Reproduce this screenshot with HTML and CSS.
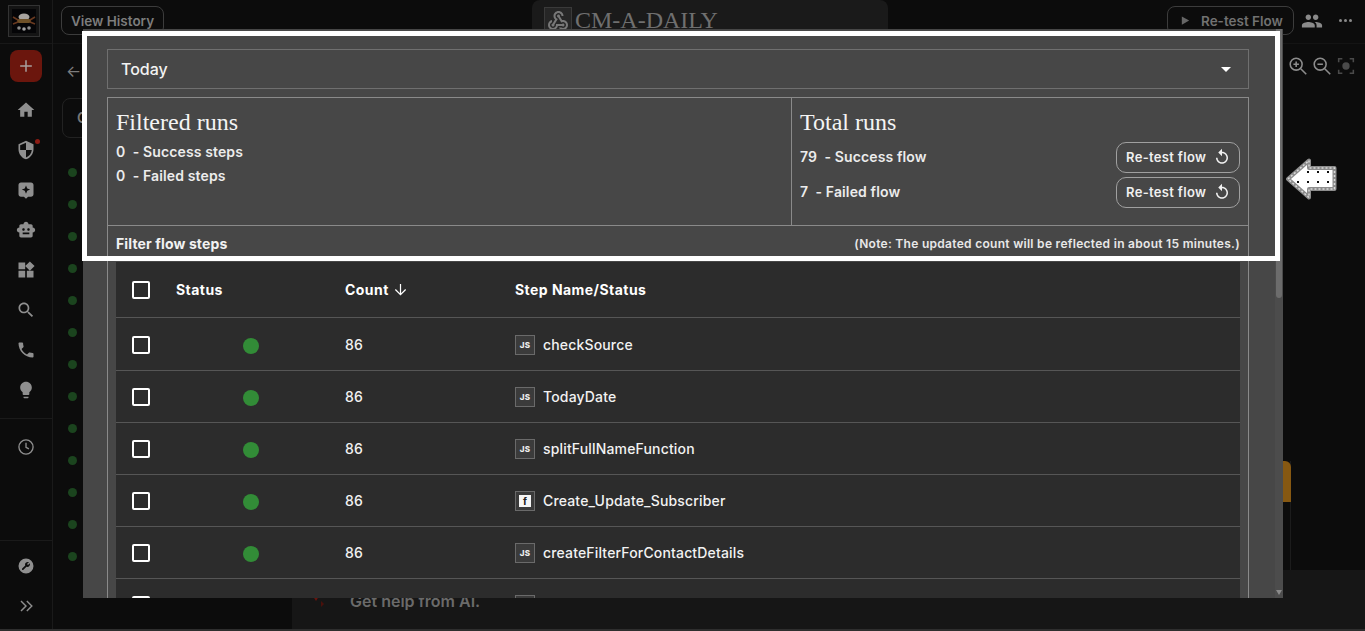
FILE: index.html
```html
<!DOCTYPE html>
<html lang="en">
<head>
<meta charset="utf-8">
<title>CM-A-DAILY</title>
<link rel="stylesheet" href="styles.css">
</head>
<body>
<div class="app">
  <aside class="sidebar">
    <div class="logo-wrap">
      <div class="logo">
        <svg viewBox="0 0 30 30" class="logo-svg"><rect x="3" y="3" width="24" height="24" fill="#050507"/><ellipse cx="15" cy="11" rx="5.500" ry="3.500" fill="#a8a4a0"/><rect x="8" y="13" width="14" height="4" rx="2" fill="#6e5128"/><path d="M4 11l5 3M26 11l-5 3M4 18l5-2M26 18l-5-2" stroke="#6a3a20" stroke-width="1.600"/><circle cx="10" cy="22" r="1.800" fill="#8c8c8c"/><circle cx="15" cy="23" r="1.800" fill="#a0a0a0"/><circle cx="20" cy="22" r="1.800" fill="#8c8c8c"/></svg>
      </div>
    </div>
    <div class="new-btn"><svg viewBox="0 0 24 24" class="ico-side"><path d="M12 5v14M5 12h14" stroke="#a8a09e" stroke-width="1.800" fill="none"/></svg></div>
    <nav class="side-nav">
      <div class="side-item"><svg viewBox="0 0 24 24" class="ico-side"><path d="M10 20v-6h4v6h5v-8h3L12 3 2 12h3v8z"/></svg></div>
      <div class="side-item side-alert"><svg viewBox="0 0 24 24" class="ico-side"><path d="M12 1L3 5v6c0 5.550 3.840 10.740 9 12 5.160-1.260 9-6.450 9-12V5l-9-4zm0 10.990h7c-.53 4.120-3.280 7.790-7 8.940V12H5V6.300l7-3.110v8.800z"/></svg></div>
      <div class="side-item"><svg viewBox="0 0 24 24" class="ico-side"><path fill-rule="evenodd" d="M6 3h12c1.700 0 3 1.300 3 3v11c0 1.700-1.300 3-3 3h-3.500L12 22.500 9.500 20H6c-1.700 0-3-1.300-3-3V6c0-1.700 1.300-3 3-3zm6 3.500-1.500 3.800L7 11.500l3.500 1.300 1.500 3.700 1.500-3.700 3.500-1.300-3.500-1.200z"/></svg></div>
      <div class="side-item"><svg viewBox="0 0 24 24" class="ico-side"><path d="M20 9V7c0-1.100-.9-2-2-2h-3c0-1.660-1.340-3-3-3S9 3.340 9 5H6c-1.100 0-2 .9-2 2v2c-1.660 0-3 1.340-3 3s1.340 3 3 3v4c0 1.100.9 2 2 2h12c1.100 0 2-.9 2-2v-4c1.660 0 3-1.340 3-3s-1.340-3-3-3zM7.500 11.500c0-.83.67-1.500 1.500-1.500s1.500.67 1.500 1.500S9.830 13 9 13s-1.500-.67-1.500-1.500zM16 17H8v-2h8v2zm-1-4c-.83 0-1.500-.67-1.500-1.500S14.170 10 15 10s1.500.67 1.500 1.500S15.830 13 15 13z"/></svg></div>
      <div class="side-item"><svg viewBox="0 0 24 24" class="ico-side"><path d="M13 13v8h8v-8h-8zM3 21h8v-8H3v8zM3 3v8h8V3H3zm13.660-1.310L11 7.340 16.660 13l5.660-5.660-5.660-5.650z"/></svg></div>
      <div class="side-item"><svg viewBox="0 0 24 24" class="ico-side"><path d="M15.500 14h-.79l-.28-.27C15.410 12.590 16 11.110 16 9.500 16 5.910 13.090 3 9.500 3S3 5.910 3 9.500 5.910 16 9.500 16c1.610 0 3.090-.59 4.230-1.570l.27.28v.79l5 4.990L20.490 19l-4.990-5zm-6 0C7.010 14 5 11.990 5 9.500S7.010 5 9.500 5 14 7.010 14 9.500 11.990 14 9.500 14z"/></svg></div>
      <div class="side-item"><svg viewBox="0 0 24 24" class="ico-side"><path d="M6.620 10.790c1.440 2.830 3.760 5.140 6.590 6.590l2.200-2.200c.27-.27.67-.36 1.020-.24 1.120.37 2.330.57 3.570.57.55 0 1 .45 1 1V20c0 .55-.45 1-1 1-9.390 0-17-7.610-17-17 0-.55.45-1 1-1h3.500c.55 0 1 .45 1 1 0 1.250.2 2.450.57 3.570.11.35.03.74-.25 1.020l-2.200 2.200z"/></svg></div>
      <div class="side-item"><svg viewBox="0 0 24 24" class="ico-side"><path d="M9 21c0 .55.45 1 1 1h4c.55 0 1-.45 1-1v-1H9v1zm3-19C8.140 2 5 5.140 5 9c0 2.380 1.190 4.470 3 5.740V17c0 .55.45 1 1 1h6c.55 0 1-.45 1-1v-2.260c1.810-1.270 3-3.360 3-5.740 0-3.860-3.140-7-7-7z"/></svg></div>
    </nav>
    <div class="side-section">
      <div class="side-item"><svg viewBox="0 0 24 24" class="ico-side"><circle cx="12" cy="12" r="8.500" fill="none" stroke="#8f8f8f" stroke-width="1.600"/><path d="M12 7v5.300l3.500 2" fill="none" stroke="#8f8f8f" stroke-width="1.600"/></svg></div>
    </div>
    <div class="side-bottom">
      <div class="side-item"><svg viewBox="0 0 24 24" class="ico-side"><path fill-rule="evenodd" d="M12 3a9 9 0 1 1 0 18 9 9 0 0 1 0-18zm3.500 4.500-2.300 2.200 1.200 1.200 2.200-2.200c.4 1.300.1 2.600-.8 3.500-.9.900-2.100 1.100-3.200.7l-3.700 3.700c-.4.4-1.100.4-1.500 0s-.4-1.100 0-1.500l3.700-3.700c-.4-1.100-.2-2.400.7-3.200.9-.9 2.400-1.200 3.700-.7z"/></svg></div>
      <div class="side-item"><svg viewBox="0 0 24 24" class="ico-side"><path d="M6 6l6 6-6 6M13 6l6 6-6 6" fill="none" stroke="#8f8f8f" stroke-width="1.700"/></svg></div>
    </div>
  </aside>

  <div class="main">
    <header class="topbar">
      <div class="history-btn">View History</div>
      <div class="title-panel">
        <div class="title-icon"><svg viewBox="0 0 24 24" class="ico-title"><path d="M10 15h5.880c.27-.31.67-.5 1.120-.5.83 0 1.500.67 1.500 1.500s-.67 1.500-1.500 1.500c-.44 0-.84-.19-1.120-.5H11.900c-.46 2.280-2.480 4-4.900 4-2.760 0-5-2.240-5-5 0-2.420 1.720-4.440 4-4.900v2.070c-1.160.41-2 1.530-2 2.830 0 1.650 1.350 3 3 3s3-1.350 3-3v-1zm2.500-11c1.650 0 3 1.350 3 3h2c0-2.760-2.240-5-5-5s-5 2.240-5 5c0 1.430.6 2.710 1.550 3.620l-2.350 3.900c-.68.14-1.200.75-1.200 1.480 0 .83.67 1.500 1.500 1.500s1.500-.67 1.500-1.500c0-.16-.02-.31-.07-.45l3.380-5.630C10.490 9.610 9.500 8.420 9.500 7c0-1.650 1.350-3 3-3zm4.500 9c-.64 0-1.230.2-1.730.54l-3.050-5.070C11.290 8.140 11 7.610 11 7c0-.83.67-1.500 1.500-1.500S14 6.170 14 7c0 .15-.02.29-.06.43l2.190 3.640c.28-.05.57-.07.87-.07 2.760 0 5 2.240 5 5s-2.240 5-5 5c-1.850 0-3.470-1.010-4.330-2.500h2.670c.48.32 1.060.5 1.660.5 1.650 0 3-1.350 3-3s-1.350-3-3-3z"/></svg></div>
        <span class="title-text">CM-A-DAILY</span>
      </div>
      <div class="top-right">
        <div class="retest-top"><svg viewBox="0 0 12 12" class="ico-play"><path d="M2 1.500v9l8-4.500z"/></svg><span>Re-test Flow</span></div>
        <svg viewBox="0 0 24 24" class="ico-people"><path d="M16 11c1.660 0 2.990-1.340 2.990-3S17.660 5 16 5c-1.660 0-3 1.340-3 3s1.340 3 3 3zm-8 0c1.660 0 2.990-1.340 2.990-3S9.660 5 8 5C6.340 5 5 6.340 5 8s1.340 3 3 3zm0 2c-2.330 0-7 1.170-7 3.500V19h14v-2.500c0-2.330-4.670-3.500-7-3.500zm8 0c-.29 0-.62.02-.97.05 1.160.84 1.970 1.970 1.970 3.450V19h6v-2.500c0-2.330-4.670-3.500-7-3.500z"/></svg>
        <div class="more-dots"><i></i><i></i><i></i></div>
      </div>
    </header>
    <div class="canvas">
      <div class="back-arrow">←</div>
      <div class="under-card">C</div>
      <div class="dots">
        <i></i><i></i><i></i><i></i><i></i><i></i><i></i><i></i><i></i><i></i><i></i><i></i><i></i>
      </div>
    </div>
    <div class="zoom-tools">
      <svg viewBox="0 0 24 24" class="ico-zoom"><circle cx="10" cy="10" r="6.500" fill="none" stroke="#8c8c8c" stroke-width="1.700"/><path d="M15 15l6 6M10 7v6M7 10h6" stroke="#8c8c8c" stroke-width="1.700" fill="none"/></svg>
      <svg viewBox="0 0 24 24" class="ico-zoom"><circle cx="10" cy="10" r="6.500" fill="none" stroke="#8c8c8c" stroke-width="1.700"/><path d="M15 15l6 6M7 10h6" stroke="#8c8c8c" stroke-width="1.700" fill="none"/></svg>
      <svg viewBox="0 0 24 24" class="ico-zoom"><path d="M4 8V4h4M16 4h4v4M20 16v4h-4M8 20H4v-4" fill="none" stroke="#4a4a4a" stroke-width="1.700"/><circle cx="12" cy="12" r="4" fill="#4a4a4a"/></svg>
    </div>
    <div class="orange-tab"></div>
    <div class="ai-panel">
      <svg viewBox="0 0 20 20" class="ico-ai"><path d="M3 2h10l-5 8z" fill="#6a140e"/><path d="M13 10l3 3-3 3z" fill="#4a100b"/></svg>
      <span class="ai-text">Get help from AI.</span>
    </div>
  </div>
</div>

<section class="modal">
  <div class="select">
    <span>Today</span>
    <i class="caret"></i>
  </div>
  <div class="panel">
    <div class="stats">
      <div class="stat-left">
        <h2 class="stat-title">Filtered runs</h2>
        <div class="stat-lines">
          <div class="stat-line">0&nbsp;&nbsp;- Success steps</div>
          <div class="stat-line">0&nbsp;&nbsp;- Failed steps</div>
        </div>
      </div>
      <div class="stat-right">
        <h2 class="stat-title">Total runs</h2>
        <div class="total-rows">
          <div class="total-row">
            <span class="stat-line">79&nbsp;&nbsp;- Success flow</span>
            <button class="retest">Re-test flow<svg viewBox="0 0 24 24" class="ico-replay"><path d="M12 5V1L7 6l5 5V7c3.310 0 6 2.690 6 6s-2.690 6-6 6-6-2.690-6-6H4c0 4.420 3.580 8 8 8s8-3.580 8-8-3.580-8-8-8z"/></svg></button>
          </div>
          <div class="total-row">
            <span class="stat-line">7&nbsp;&nbsp;- Failed flow</span>
            <button class="retest">Re-test flow<svg viewBox="0 0 24 24" class="ico-replay"><path d="M12 5V1L7 6l5 5V7c3.310 0 6 2.690 6 6s-2.690 6-6 6-6-2.690-6-6H4c0 4.420 3.580 8 8 8s8-3.580 8-8-3.580-8-8-8z"/></svg></button>
          </div>
        </div>
      </div>
    </div>
    <div class="filter-row">
      <span class="filter-title">Filter flow steps</span>
      <span class="filter-note">(Note: The updated count will be reflected in about 15 minutes.)</span>
    </div>
    <div class="table">
      <div class="tr th">
        <i class="check"></i>
        <span>Status</span>
        <span class="count-head">Count <svg viewBox="0 0 16 16" class="ico-down"><path d="M8 2v11.500M2.500 8l5.500 5.500L13.500 8" fill="none" stroke="#fff" stroke-width="1.300"/></svg></span>
        <span>Step Name/Status</span>
      </div>
      <div class="tr first">
        <i class="check"></i><i class="status"></i><span>86</span>
        <span class="step"><b class="step-ico">JS</b>checkSource</span>
      </div>
      <div class="tr">
        <i class="check"></i><i class="status"></i><span>86</span>
        <span class="step"><b class="step-ico">JS</b>TodayDate</span>
      </div>
      <div class="tr">
        <i class="check"></i><i class="status"></i><span>86</span>
        <span class="step"><b class="step-ico">JS</b>splitFullNameFunction</span>
      </div>
      <div class="tr">
        <i class="check"></i><i class="status"></i><span>86</span>
        <span class="step"><b class="step-ico fb"><em>f</em></b>Create_Update_Subscriber</span>
      </div>
      <div class="tr">
        <i class="check"></i><i class="status"></i><span>86</span>
        <span class="step"><b class="step-ico">JS</b>createFilterForContactDetails</span>
      </div>
      <div class="tr">
        <i class="check"></i><i></i><span></span>
        <span class="step"><i class="step-ico"></i></span>
      </div>
    </div>
  </div>
  <div class="scrollbar"><div class="thumb"></div><i class="scroll-down"></i></div>
</section>

<div class="highlight"></div>

<svg class="pointer" viewBox="0 0 52 42">
  <path d="M3 21 24 2.500V10h25.500v21H24v8.500z" fill="#fff" stroke="#8c8c8c" stroke-width="4" stroke-linejoin="round"/>
  <path d="M3 21 24 2.500V10h25.500v21H24v8.500z" fill="none" stroke="#d8d8d8" stroke-width="1.500" stroke-dasharray="2 2"/>
  <g fill="#111"><rect x="22" y="13" width="2" height="2"/><rect x="32" y="13" width="2" height="2"/><rect x="42" y="13" width="2" height="2"/><rect x="12" y="23" width="2" height="2"/><rect x="22" y="23" width="2" height="2"/><rect x="32" y="23" width="2" height="2"/><rect x="42" y="23" width="2" height="2"/></g>
</svg>
</body>
</html>
```

FILE: styles.css
```css
* { box-sizing: border-box; }
html, body { margin: 0; height: 631px; overflow: hidden; }
body { background: #0c0c0c; font-family: Inter, "Liberation Sans", sans-serif; color: #fff; position: relative; }

.app { display: flex; height: 629px; }
body::after { content: ""; position: absolute; left: 0; right: 0; bottom: 0; height: 2px; background: #2e2e2e; }

/* sidebar */
.sidebar { width: 53px; flex: none; border-right: 1px solid #1a1a1a; display: flex; flex-direction: column; height: 629px; }
.logo-wrap { height: 44px; padding: 5px 0 0 8px; border-bottom: 1px solid #181818; }
.logo { width: 32px; height: 32px; border: 1px solid #333; background: #141414; }
.logo-svg { width: 30px; height: 30px; display: block; }
.new-btn { width: 32px; height: 32px; margin: 6px 0 8px 10px; border-radius: 8px; background: #6b160d; display: flex; align-items: center; justify-content: center; }
.side-nav { display: flex; flex-direction: column; border-bottom: 1px solid #1a1a1a; padding-bottom: 8px; }
.side-item { height: 40px; width: 52px; display: flex; align-items: center; justify-content: center; position: relative; }
.ico-side { width: 20px; height: 20px; fill: #8f8f8f; }
.side-alert::after { content: ""; position: absolute; left: 35px; top: 9px; width: 5px; height: 5px; border-radius: 50%; background: #8c1c14; }
.side-section { padding-top: 8px; }
.side-bottom { margin-top: auto; border-top: 1px solid #1a1a1a; padding: 5px 0 3px; }

/* main underlay */
.main { flex: 1; position: relative; display: flex; flex-direction: column; min-width: 0; }
.topbar { height: 44px; padding: 6px 0 0 8px; display: flex; align-items: flex-start; border-bottom: 1px solid #141414; }
.history-btn { width: 103px; height: 29px; border: 1px solid #3c3c3c; border-radius: 8px; color: #7d7d7d; font-size: 13.500px; font-weight: 600; display: flex; align-items: center; justify-content: center; }
.title-panel { margin: -6px 0 0 368px; width: 356px; height: 40px; background: #1a1a1a; border-radius: 8px; padding: 7px 0 0 12px; display: flex; align-items: flex-start; }
.title-icon { width: 28px; height: 28px; border: 1px solid #3a3a3a; background: #262626; display: flex; align-items: center; justify-content: center; }
.ico-title { width: 24px; height: 24px; fill: #787878; }
.title-text { font-family: "Liberation Serif", serif; font-size: 24px; color: #6f6f6f; margin-left: 3px; line-height: 26px; }
.top-right { margin-left: auto; display: flex; align-items: center; height: 29px; }
.retest-top { width: 127px; height: 29px; border: 1px solid #3c3c3c; border-radius: 8px; color: #717171; font-size: 13.500px; font-weight: 600; display: flex; align-items: center; padding-left: 12px; margin-right: 7px; }
.ico-play { width: 11px; height: 11px; fill: #666; margin-right: 10px; }
.ico-people { width: 22px; height: 22px; fill: #8a8a8a; margin-right: 16px; }
.more-dots { width: 26px; display: flex; gap: 2px; }
.more-dots i { display: block; width: 3px; height: 3px; border-radius: 50%; background: #8a8a8a; }

.canvas { flex: 1; padding: 16px 0 0 9px; }
.back-arrow { color: #7c7c7c; font-size: 16px; line-height: 22px; height: 38px; margin-left: 4px; }
.under-card { width: 100px; height: 40px; border: 1px solid #222; border-radius: 8px; color: #777; font-size: 14px; font-weight: 600; padding: 10px 0 0 14px; }
.dots { margin: 30px 0 0 6px; display: flex; flex-direction: column; gap: 23px; }
.dots i { display: block; width: 9px; height: 9px; border-radius: 50%; background: #1b441e; }

.zoom-tools { position: absolute; top: 55px; right: 8px; display: flex; gap: 2px; }
.ico-zoom { width: 22px; height: 22px; }
.orange-tab { position: absolute; left: 1230px; top: 461px; width: 8px; height: 109px; border-right: 1px solid #1c1c1c; }
.orange-tab::before { content: ""; display: block; width: 8px; height: 41px; background: #865812; border-radius: 0 6px 0 0; }
.ai-panel { position: absolute; left: 239px; right: 0; top: 570px; height: 59px; background: #161616; padding: 21px 0 0 16px; display: flex; align-items: flex-start; }
.ico-ai { width: 20px; height: 20px; margin-right: 22px; flex: none; }
.ai-text { color: #6a6a6a; font-size: 16px; line-height: 20px; font-weight: 600; }

/* modal */
.modal { position: absolute; left: 83px; top: 29px; width: 1200px; height: 569px; background: #474747; overflow: hidden; padding: 20px 0 0 24px; }
.select { width: 1142px; height: 40px; border: 1px solid #6f6f6f; display: flex; align-items: center; justify-content: space-between; padding: 0 17px 0 13px; font-size: 16px; font-weight: 500; color: #f2f2f2; }
.caret { width: 0; height: 0; border-left: 5px solid transparent; border-right: 5px solid transparent; border-top: 5px solid #fff; }
.panel { width: 1142px; margin-top: 8px; border: 1px solid #8a8a8a; border-bottom: 0; height: 600px; }
.stats { display: flex; height: 128px; border-bottom: 1px solid #8a8a8a; }
.stat-left { width: 684px; flex: none; border-right: 1px solid #8a8a8a; padding: 10px 8px 0; }
.stat-right { flex: 1; padding: 10px 8px 0; }
.stat-title { margin: 0; font-family: "Liberation Serif", serif; font-weight: 400; font-size: 24px; line-height: 28px; color: #f4f4f4; }
.stat-lines { margin-top: 6px; display: flex; flex-direction: column; gap: 5px; }
.stat-line { font-size: 14px; line-height: 19px; font-weight: 600; color: #ececec; letter-spacing: .13px; }
.total-rows { margin-top: 6px; display: flex; flex-direction: column; gap: 4px; }
.total-row { display: flex; align-items: center; justify-content: space-between; }
.total-row .stat-line { margin-bottom: 2px; }
.retest { width: 124px; height: 31px; background: transparent; border: 1px solid #a0a0a0; border-radius: 10px; color: #f0f0f0; font: 600 13px Inter, "Liberation Sans", sans-serif; letter-spacing: .33px; display: flex; align-items: center; justify-content: space-between; padding: 0 8px 2px 9px; }
.ico-replay { width: 18px; height: 18px; fill: #f0f0f0; margin-left: 1px; }
.filter-row { height: 36px; padding: 9px 8px 0; display: flex; justify-content: space-between; align-items: flex-start; }
.filter-title { font-size: 14px; line-height: 17px; font-weight: 700; color: #f2f2f2; letter-spacing: .13px; }
.filter-note { font-size: 12px; line-height: 17px; color: #e8e8e8; font-weight: 600; letter-spacing: .29px; }

/* table */
.table { width: 1124px; margin-left: 8px; background: #2c2c2c; }
.tr { display: grid; grid-template-columns: 44px 169px 170px 1fr; align-items: center; height: 52px; padding-left: 16px; border-top: 1px solid #565656; font-size: 14px; font-weight: 500; color: #f2f2f2; letter-spacing: .16px; }
.th { height: 55px; border-top: 0; font-weight: 700; color: #fff; letter-spacing: .45px; }
.first { height: 53px; padding-top: 1px; }
.check { display: block; width: 18px; height: 18px; border: 2px solid #fff; border-radius: 2px; }
.status { display: block; width: 16px; height: 16px; border-radius: 50%; background: #328c37; margin: 2px 0 0 67px; }
.count-head { display: flex; align-items: center; gap: 4px; }
.ico-down { width: 15px; height: 15px; }
.step { display: flex; align-items: center; gap: 8px; }
.step-ico { width: 20px; height: 20px; border: 1px solid #6a6a6a; background: #3b3b3b; font-size: 8px; font-weight: 800; color: #eee; display: flex; align-items: center; justify-content: center; letter-spacing: .3px; }
.fb em { display: block; width: 12px; height: 12px; background: #f6f6f6; color: #222; font: 700 11px/12px "Liberation Sans", sans-serif; text-align: center; }

.scrollbar { position: absolute; right: 0; top: 0; width: 8px; height: 569px; background: #4c4c4c; }
.thumb { position: absolute; top: 0; left: 1px; width: 6px; height: 269px; background: #6c6c6c; border-radius: 0 0 3px 3px; }
.scroll-down { position: absolute; left: 1px; top: 561px; width: 0; height: 0; border-left: 3px solid transparent; border-right: 3px solid transparent; border-top: 5px solid #8a8a8a; }

.highlight { position: absolute; left: 82px; top: 31px; width: 1198px; height: 230px; border: 5px solid #fff; }
.pointer { position: absolute; left: 1285px; top: 158px; width: 52px; height: 42px; }
```
